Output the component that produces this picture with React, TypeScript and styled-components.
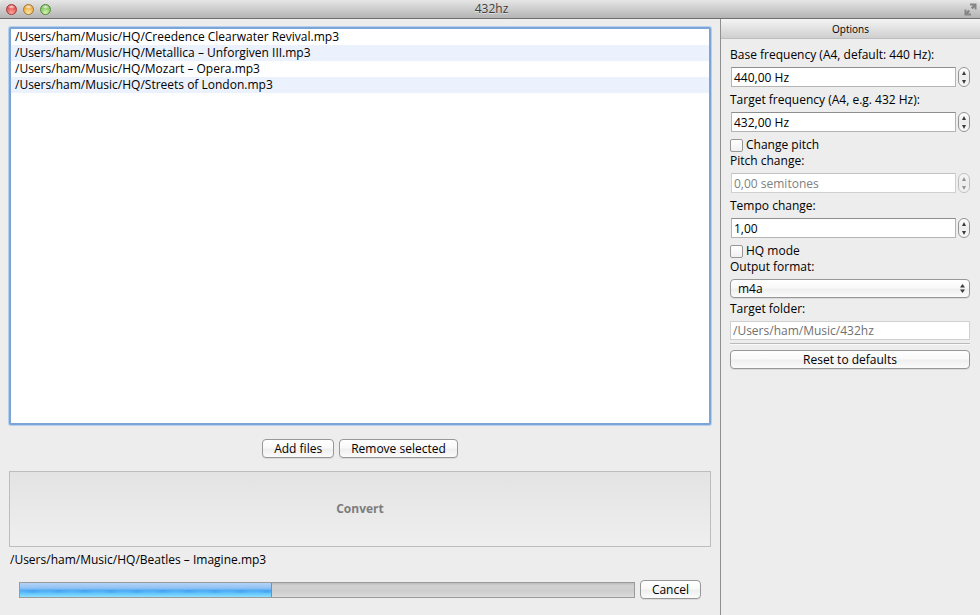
import React, { useState } from "react";
import styled, { createGlobalStyle, css } from "styled-components";

const GlobalStyle = createGlobalStyle`
  *, *::before, *::after { box-sizing: border-box; }
  body { margin: 0; background: #ededed; }
  body, button, input, select {
    font-family: "Lucida Grande", "Open Sans", "Noto Sans", sans-serif;
    font-size: 12px;
    line-height: 16px;
    color: #000;
  }
`;

const Window = styled.div`
  display: flex;
  flex-direction: column;
  min-height: 100vh;
  background: #ededed;
`;

const TitleBar = styled.header`
  display: grid;
  grid-template-columns: 1fr auto 1fr;
  align-items: center;
  height: 19px;
  padding: 0 3px 0 6px;
  border-bottom: 1px solid #6f6f6f;
  border-radius: 4px 4px 0 0;
  background: linear-gradient(#e6e6e6, #b4b4b4);
`;

const Title = styled.h1`
  margin: 0;
  font-size: 12px;
  font-weight: 400;
  line-height: 18px;
  color: #3c3c3c;
  text-shadow: 0 1px 0 rgba(255, 255, 255, 0.5);
`;

const Lights = styled.div`
  display: flex;
  gap: 6px;
`;

const Light = styled.button<{ $rim: string; $fill: string; $glow: string }>`
  width: 11px;
  height: 11px;
  padding: 0;
  border: 1px solid ${(p) => p.$rim};
  border-radius: 50%;
  background:
    radial-gradient(ellipse 4px 2px at 50% 20%, rgba(255, 255, 255, 0.9), transparent),
    radial-gradient(circle at 50% 90%, ${(p) => p.$glow}, ${(p) => p.$fill} 75%);
`;

const FullScreen = styled.button`
  justify-self: end;
  display: flex;
  padding: 0;
  border: 0;
  background: none;
`;

const Body = styled.div`
  display: flex;
  flex: 1;
`;

const Main = styled.main`
  display: flex;
  flex: 1;
  flex-direction: column;
  min-width: 0;
  padding: 8px 9px 16px;
`;

const FileList = styled.ul`
  flex: 1;
  margin: 0;
  padding: 0;
  list-style: none;
  border: 2px solid #7ba5d6;
  border-radius: 2px;
  box-shadow: 0 0 0 1px #b5d0ed;
  background: #fff;
`;

const FileItem = styled.li`
  padding: 0 4px;
  line-height: 16px;
  white-space: nowrap;
  overflow: hidden;
  text-overflow: ellipsis;
  &:nth-child(even) { background: #ebf1fd; }
`;

const ButtonRow = styled.div`
  display: flex;
  justify-content: center;
  gap: 5px;
  margin: 14px 0 13px;
`;

const glossy = css`
  border: 1px solid #979797;
  border-radius: 4px;
  background: linear-gradient(#fff, #f9f9f9 45%, #efefef 55%, #fbfbfb);
  box-shadow: 0 1px 0 rgba(0, 0, 0, 0.08);
`;

const PushButton = styled.button`
  ${glossy}
  height: 19px;
  padding: 0 11px;
  line-height: 17px;
  white-space: nowrap;
`;

const ConvertButton = styled.button`
  height: 76px;
  border: 1px solid #bdbdbd;
  background: linear-gradient(#e3e3e3, #efefef);
  font-weight: 700;
  color: #7d7d7d;
`;

const CurrentFile = styled.p`
  margin: 5px 1px 12px;
`;

const ProgressRow = styled.div`
  display: flex;
  align-items: center;
  gap: 5px;
  padding: 0 10px;
`;

const Track = styled.div`
  flex: 1;
  height: 16px;
  border: 1px solid #9b9b9b;
  background: linear-gradient(#bcbcbc, #d2d2d2 20%, #cecece 60%, #dcdcdc);
`;

const Fill = styled.div`
  height: 100%;
  border-right: 1px solid #6b93bd;
  background:
    repeating-linear-gradient(90deg, transparent 0 4px, rgba(20, 130, 235, 0.22) 13px, transparent 22px 26px) 0 7px / 100% 3px no-repeat,
    linear-gradient(#b3d3f6, #93c3f4 35%, #4fabf3 55%, #66c5fb 75%, #8ce0ff);
`;

const Sidebar = styled.aside`
  flex: 0 0 260px;
  border-left: 1px solid #8f8f8f;
`;

const SidebarTitle = styled.h2`
  height: 20px;
  margin: 0;
  border-bottom: 1px solid #bcbcbc;
  background: linear-gradient(#f4f4f4, #cfcfcf);
  font-size: 10px;
  font-weight: 400;
  line-height: 20px;
  text-align: center;
`;

const Form = styled.form`
  display: flex;
  flex-direction: column;
  gap: 5px;
  padding: 8px 10px 8px 9px;
`;

const Field = styled.div`
  display: flex;
  flex-direction: column;
  gap: 4px;
`;

const Label = styled.label`
  white-space: nowrap;
`;

const OptionGroup = styled.div`
  display: flex;
  flex-direction: column;
`;

const OutputGroup = styled.div`
  display: flex;
  flex-direction: column;
  gap: 3px;
`;

const SpinRow = styled.div`
  display: flex;
  gap: 2px;
  padding-left: 1px;
`;

const TextInput = styled.input`
  flex: 1;
  min-width: 0;
  height: 20px;
  margin: 0;
  padding: 0 2px;
  border: 1px solid #b4b4b4;
  border-top-color: #8e8e8e;
  border-radius: 0;
  background: #fff;
  &:disabled {
    border-color: #d0d0d0;
    border-top-color: #c2c2c2;
    color: #808080;
  }
`;

const FolderInput = styled(TextInput)`
  flex: none;
  width: 100%;
  height: 19px;
  border-color: #d0d0d0;
  color: #707070;
`;

const Stepper = styled.div`
  display: flex;
  flex-direction: column;
  width: 12px;
  height: 20px;
  border: 1px solid #949494;
  border-radius: 6px;
  background: linear-gradient(#fff, #ececec 50%, #fafafa);
  overflow: hidden;
  &:has(:disabled) { opacity: 0.5; }
`;

const StepButton = styled.button`
  display: flex;
  flex: 1;
  align-items: center;
  justify-content: center;
  padding: 0;
  border: 0;
  background: none;
`;

const CheckLabel = styled.label`
  display: flex;
  align-items: center;
  gap: 3px;
  height: 16px;
`;

const Checkbox = styled.input`
  appearance: none;
  width: 13px;
  height: 13px;
  margin: 0;
  border: 1px solid #979797;
  border-radius: 2px;
  background: linear-gradient(#fff, #f0f0f0);
  &:checked { background: #5b93d6; }
`;

const SelectBox = styled.div`
  display: grid;
  align-items: center;
`;

const Select = styled.select`
  ${glossy}
  grid-area: 1 / 1;
  appearance: none;
  width: 100%;
  height: 19px;
  padding: 0 20px 0 7px;
  line-height: 17px;
`;

const SelectArrows = styled.svg`
  grid-area: 1 / 1;
  justify-self: end;
  margin-right: 5px;
  pointer-events: none;
`;

const Separator = styled.hr`
  width: 100%;
  margin: 0;
  border: 0;
  border-top: 1px solid #bababa;
  border-bottom: 1px solid #fafafa;
`;

const ResetButton = styled(PushButton)`
  margin-top: 2px;
`;

const files = [
  "/Users/ham/Music/HQ/Creedence Clearwater Revival.mp3",
  "/Users/ham/Music/HQ/Metallica – Unforgiven III.mp3",
  "/Users/ham/Music/HQ/Mozart – Opera.mp3",
  "/Users/ham/Music/HQ/Streets of London.mp3",
];

const defaults = { base: 440, target: 432, pitch: 0, tempo: 1 };
const format = (n: number) => n.toFixed(2).replace(".", ",");

interface SpinProps {
  id: string;
  label: string;
  value: number;
  step: number;
  unit?: string;
  disabled?: boolean;
  onChange: (value: number) => void;
}

function SpinField({ id, label, value, step, unit = "", disabled, onChange }: SpinProps) {
  return (
    <Field>
      <Label htmlFor={id}>{label}</Label>
      <SpinRow>
        <TextInput
          id={id}
          type="text"
          disabled={disabled}
          value={format(value) + unit}
          onChange={(e) => {
            const next = parseFloat(e.target.value.replace(",", "."));
            if (!Number.isNaN(next)) onChange(next);
          }}
        />
        <Stepper>
          <StepButton type="button" aria-label="Increase" disabled={disabled} onClick={() => onChange(value + step)}>
            <svg width="4" height="4" viewBox="0 0 4 4"><path d="M2 0L4 4H0Z" fill="#3a3a3a" /></svg>
          </StepButton>
          <StepButton type="button" aria-label="Decrease" disabled={disabled} onClick={() => onChange(value - step)}>
            <svg width="4" height="4" viewBox="0 0 4 4"><path d="M0 0H4L2 4Z" fill="#3a3a3a" /></svg>
          </StepButton>
        </Stepper>
      </SpinRow>
    </Field>
  );
}

export default function App() {
  const [values, setValues] = useState(defaults);
  const [changePitch, setChangePitch] = useState(false);
  const [hq, setHq] = useState(false);
  const [output, setOutput] = useState("m4a");
  const progress = 41;

  const update = (key: keyof typeof defaults) => (value: number) =>
    setValues((v) => ({ ...v, [key]: value }));

  const reset = () => {
    setValues(defaults);
    setChangePitch(false);
    setHq(false);
    setOutput("m4a");
  };

  return (
    <Window>
      <GlobalStyle />
      <TitleBar>
        <Lights>
          <Light aria-label="Close" $rim="#a33c3a" $fill="#dd4a48" $glow="#ffa8a0" />
          <Light aria-label="Minimize" $rim="#a8742c" $fill="#e9a53c" $glow="#ffe9a0" />
          <Light aria-label="Zoom" $rim="#57883f" $fill="#76bb55" $glow="#d5f7b0" />
        </Lights>
        <Title>432hz</Title>
        <FullScreen aria-label="Full screen">
          <svg width="13" height="13" viewBox="0 0 13 13" fill="#858585">
            <path d="M6 0.5H12.5V6.5H10.7V4.2L8.6 6.3L6.9 4.6L9 2.5H6Z" />
            <path d="M7 12.5H0.5V6.5H2.3V8.8L4.4 6.7L6.1 8.4L4 10.5H7Z" />
          </svg>
        </FullScreen>
      </TitleBar>
      <Body>
        <Main>
          <FileList>
            {files.map((file) => (
              <FileItem key={file}>{file}</FileItem>
            ))}
          </FileList>
          <ButtonRow>
            <PushButton type="button">Add files</PushButton>
            <PushButton type="button">Remove selected</PushButton>
          </ButtonRow>
          <ConvertButton type="button" disabled>Convert</ConvertButton>
          <CurrentFile>/Users/ham/Music/HQ/Beatles – Imagine.mp3</CurrentFile>
          <ProgressRow>
            <Track role="progressbar" aria-label="Conversion" aria-valuenow={progress} aria-valuemin={0} aria-valuemax={100}>
              <Fill style={{ width: `${progress}%` }} />
            </Track>
            <PushButton type="button">Cancel</PushButton>
          </ProgressRow>
        </Main>
        <Sidebar>
          <SidebarTitle>Options</SidebarTitle>
          <Form onSubmit={(e) => e.preventDefault()}>
            <SpinField id="base" label="Base frequency (A4, default: 440 Hz):" unit=" Hz" step={1} value={values.base} onChange={update("base")} />
            <SpinField id="target" label="Target frequency (A4, e.g. 432 Hz):" unit=" Hz" step={1} value={values.target} onChange={update("target")} />
            <OptionGroup>
              <CheckLabel>
                <Checkbox type="checkbox" checked={changePitch} onChange={(e) => setChangePitch(e.target.checked)} />
                Change pitch
              </CheckLabel>
              <SpinField id="pitch" label="Pitch change:" unit=" semitones" step={1} disabled={!changePitch} value={values.pitch} onChange={update("pitch")} />
            </OptionGroup>
            <SpinField id="tempo" label="Tempo change:" step={0.01} value={values.tempo} onChange={update("tempo")} />
            <OutputGroup>
              <OptionGroup>
                <CheckLabel>
                  <Checkbox type="checkbox" checked={hq} onChange={(e) => setHq(e.target.checked)} />
                  HQ mode
                </CheckLabel>
                <Field>
                  <Label htmlFor="format">Output format:</Label>
                  <SelectBox>
                    <Select id="format" value={output} onChange={(e) => setOutput(e.target.value)}>
                      <option>m4a</option>
                      <option>mp3</option>
                      <option>wav</option>
                    </Select>
                    <SelectArrows width="5" height="9" viewBox="0 0 5 9" fill="#3a3a3a">
                      <path d="M2.5 0L5 3.5H0Z" />
                      <path d="M0 5.5H5L2.5 9Z" />
                    </SelectArrows>
                  </SelectBox>
                </Field>
              </OptionGroup>
              <Field>
                <Label htmlFor="folder">Target folder:</Label>
                <FolderInput id="folder" type="text" readOnly value="/Users/ham/Music/432hz" />
              </Field>
              <Separator />
              <ResetButton type="button" onClick={reset}>Reset to defaults</ResetButton>
            </OutputGroup>
          </Form>
        </Sidebar>
      </Body>
    </Window>
  );
}
